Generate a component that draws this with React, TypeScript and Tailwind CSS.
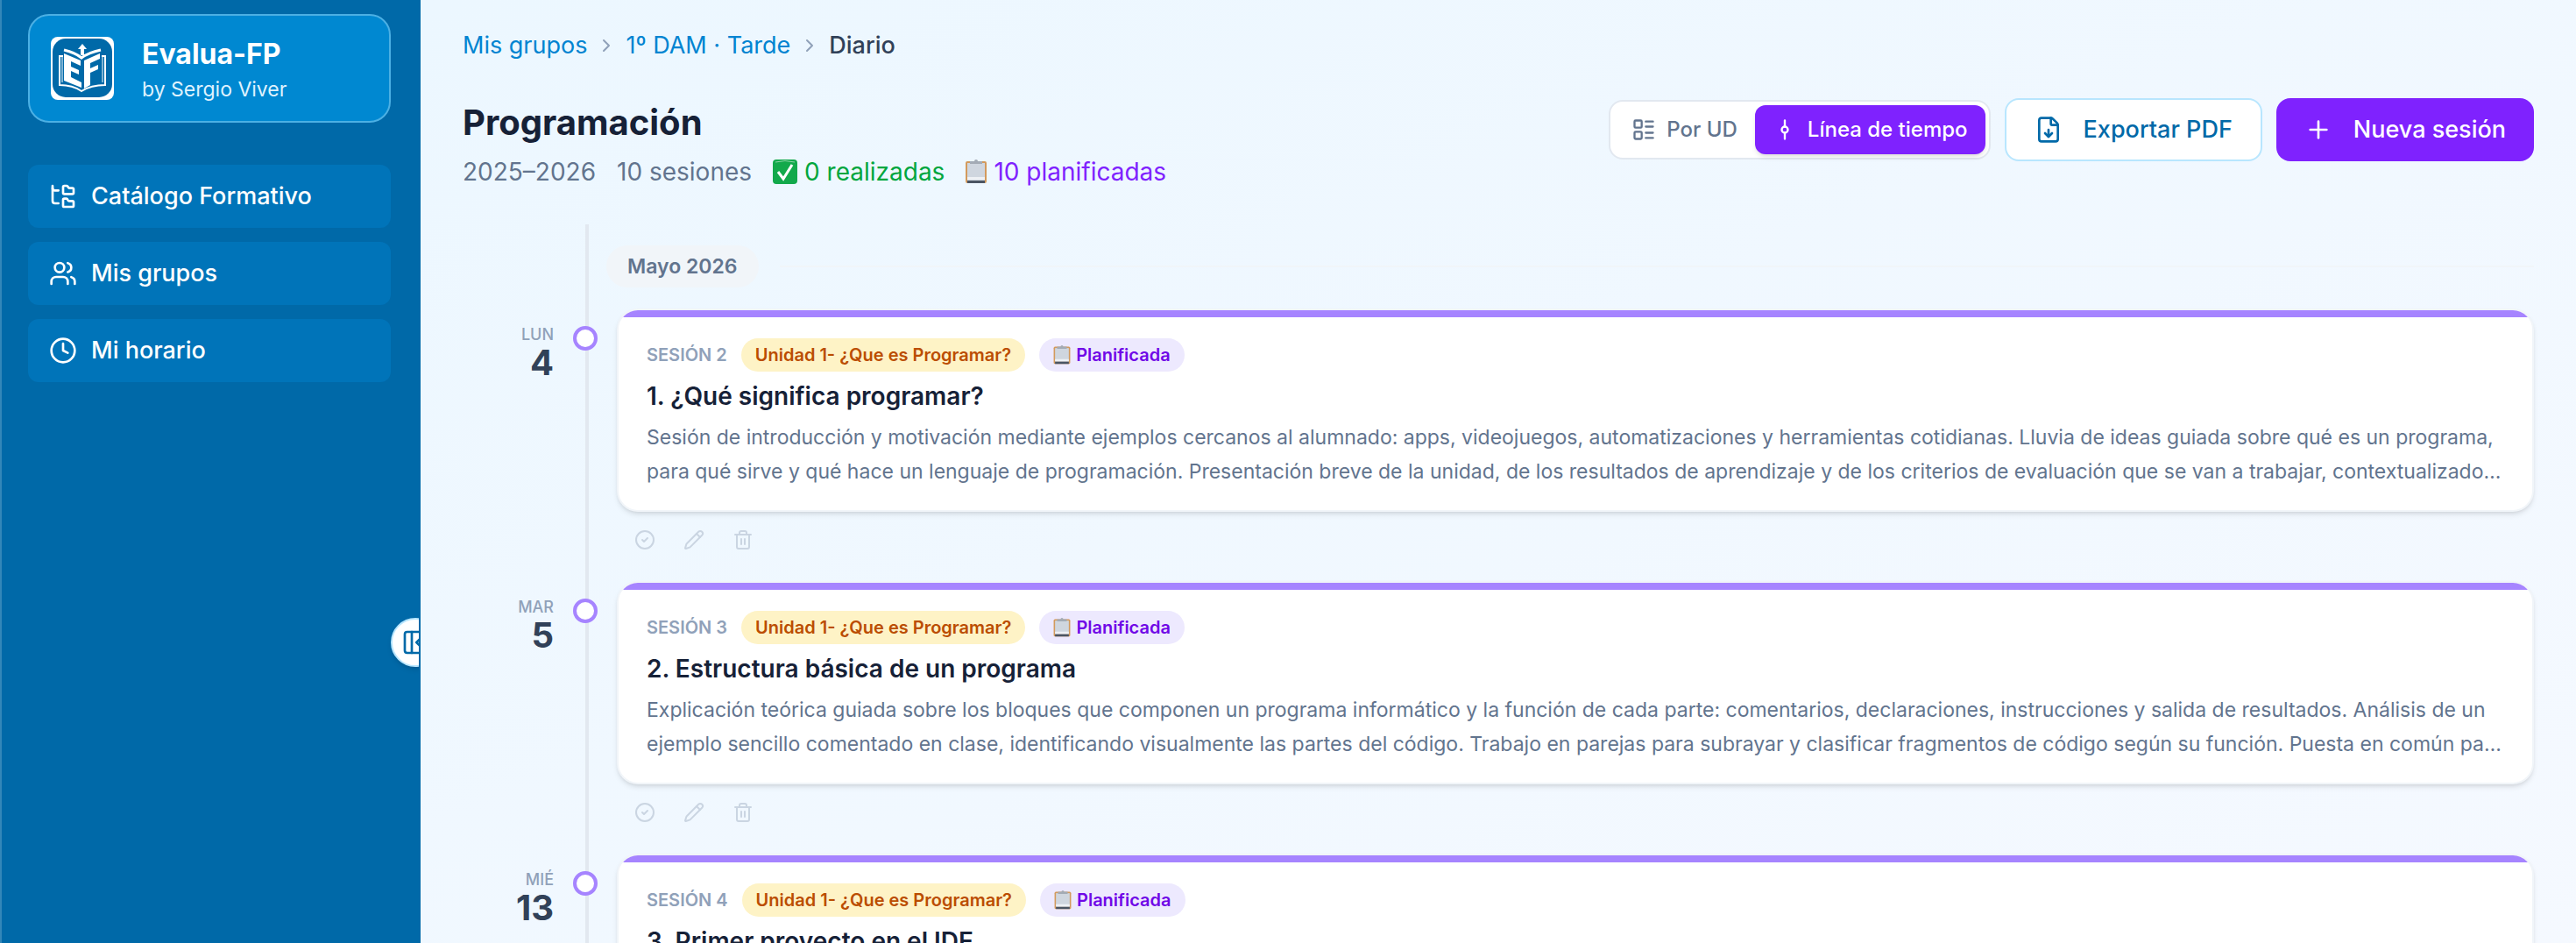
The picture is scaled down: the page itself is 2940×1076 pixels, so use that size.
import { CircleCheck, ChevronRight, Clock, FileDown, FolderTree, GitCommitVertical, LayoutList, PanelLeftClose, Pencil, Plus, Trash2, Users } from 'lucide-react';

const navItems = [
  { id: 1, label: 'Catálogo Formativo', icon: FolderTree },
  { id: 2, label: 'Mis grupos', icon: Users },
  { id: 3, label: 'Mi horario', icon: Clock },
];

const sessions = [
  {
    id: 2,
    weekday: 'LUN',
    day: 4,
    title: '1. ¿Qué significa programar?',
    lines: [
      'Sesión de introducción y motivación mediante ejemplos cercanos al alumnado: apps, videojuegos, automatizaciones y herramientas cotidianas. Lluvia de ideas guiada sobre qué es un programa,',
      'para qué sirve y qué hace un lenguaje de programación. Presentación breve de la unidad, de los resultados de aprendizaje y de los criterios de evaluación que se van a trabajar, contextualizado…',
    ],
  },
  {
    id: 3,
    weekday: 'MAR',
    day: 5,
    title: '2. Estructura básica de un programa',
    lines: [
      'Explicación teórica guiada sobre los bloques que componen un programa informático y la función de cada parte: comentarios, declaraciones, instrucciones y salida de resultados. Análisis de un',
      'ejemplo sencillo comentado en clase, identificando visualmente las partes del código. Trabajo en parejas para subrayar y clasificar fragmentos de código según su función. Puesta en común pa…',
    ],
  },
  {
    id: 4,
    weekday: 'MIÉ',
    day: 13,
    title: '3. Primer proyecto en el IDE',
    lines: [],
  },
];

const Logo = () => (
  <svg viewBox="0 0 72 72" className="size-[72px] shrink-0" aria-hidden="true">
    <rect width="72" height="72" rx="8" fill="#fff" />
    <rect x="2" y="2" width="68" height="67" rx="15" fill="#0069a8" />
    <path d="M36 8l5 6h-3v7h-4v-7h-3z" fill="#fff" />
    <g fill="none" stroke="#fff" strokeWidth="2">
      <path d="M14 22h-4v33q15 0 25 7q11-7 27-7V22h-4" />
      <path d="M13 22v30M59 22v30" strokeWidth="1" />
      <path d="M15 15q13 3 20 9q8-6 22-9" strokeWidth="3" />
    </g>
    <path d="M15 19l19 8v6l-11-5v6l9 4v5l-9-4v7l12 6v6l-20-8z" fill="#fff" />
    <path d="M38 27l18-8v6l-11 5v6l9-4v5l-9 4v14l-7 4z" fill="#fff" />
  </svg>
);

const Clipboard = ({ className }: { className: string }) => (
  <svg viewBox="0 0 24 28" className={className} aria-hidden="true">
    <rect x="0" y="2" width="24" height="25" rx="2" fill="#d39a5c" />
    <rect x="2" y="4" width="20" height="20" fill="#cfd6df" />
    <path d="M2 20h20v3H2z" fill="#eef1f5" />
    <path d="M2 24h20v3H2z" fill="#4b5563" />
    <path d="M5 2h5a2 2 0 0 1 4 0h5v3H5z" fill="#a3abb5" />
  </svg>
);

const CheckMark = () => (
  <svg viewBox="0 0 28 28" className="size-7" aria-hidden="true">
    <rect width="28" height="28" rx="4" fill="#12a94b" />
    <path d="M3 3q11-3 22 0" fill="none" stroke="#8fd3a8" />
    <path d="M6 14l6 8L22 6" fill="none" stroke="#fff" strokeWidth="3" />
  </svg>
);

const Sidebar = () => (
  <aside className="relative w-[480px] shrink-0 overflow-hidden border-x-2 border-l-[#3387b9] border-r-[#0069a8] bg-[#0069a8] pl-[30px] pr-8 pt-4">
    <div className="flex h-[124px] items-center gap-8 rounded-3xl border-2 border-[#4cb0e4] bg-[#0088d1] px-6">
      <Logo />
      <div className="pt-2 text-white">
        <div className="text-[32px] font-bold leading-10">Evalua-FP</div>
        <div className="text-[23px] leading-10 text-[#dff2fe]">by Sergio Viver</div>
      </div>
    </div>
    <nav className="mt-12 flex flex-col gap-4">
      {navItems.map(({ id, label, icon: Icon }) => (
        <a key={id} href="#" className="flex h-[72px] items-center gap-4 rounded-xl bg-[#0074b9] px-6 text-[27px] font-medium text-white">
          <Icon className="size-8" />
          {label}
        </a>
      ))}
    </nav>
    <button aria-label="Contraer menú" className="absolute -right-6 top-[705px] flex size-14 items-center justify-center rounded-full border-2 border-[#b8e6fe] bg-white text-[#0069a8] shadow-md">
      <PanelLeftClose className="size-8" />
    </button>
  </aside>
);

const Header = () => (
  <header>
    <nav className="flex items-center gap-[10px] text-[27px] leading-10 text-[#0084d1]">
      <a href="#">Mis grupos</a>
      <ChevronRight className="size-6 text-[#90a1b9]" />
      <a href="#">1º DAM · Tarde</a>
      <ChevronRight className="size-6 text-[#90a1b9]" />
      <span className="font-medium text-[#314158]">Diario</span>
    </nav>
    <div className="mt-10 flex items-start justify-between">
      <div>
        <h1 className="text-[40px] font-bold leading-14 text-[#162137]">Programación</h1>
        <div className="mt-2 flex items-center gap-6 text-[28px] leading-10 text-[#62748e]">
          <span>2025–2026</span>
          <span>10 sesiones</span>
          <span className="flex items-center gap-2 text-[#00a63e]"><CheckMark />0 realizadas</span>
          <span className="flex items-center gap-2 text-[#7f22fe]"><Clipboard className="h-7 w-6" />10 planificadas</span>
        </div>
      </div>
      <div className="flex items-center gap-4">
        <div className="flex h-[68px] items-center rounded-2xl border-2 border-[#e2e8f0] bg-white p-1 text-2xl font-medium">
          <button className="flex items-center gap-3 px-5 text-[#62748e]">
            <LayoutList className="size-7" />
            Por UD
          </button>
          <button className="flex h-14 items-center gap-3 rounded-xl bg-[#7f22fe] px-5 text-white shadow-md">
            <GitCommitVertical className="size-7" />
            Línea de tiempo
          </button>
        </div>
        <button className="flex h-[72px] items-center gap-6 rounded-2xl border-2 border-[#b8e6fe] bg-white px-8 text-[27px] font-medium text-[#0069a8]">
          <FileDown className="size-8" />
          Exportar PDF
        </button>
        <button className="flex h-[72px] items-center gap-6 rounded-2xl bg-[#7f22fe] px-8 text-[27px] font-medium text-white">
          <Plus className="size-8" />
          Nueva sesión
        </button>
      </div>
    </div>
  </header>
);

const SessionRow = ({ session }: { session: (typeof sessions)[number] }) => (
  <div className="flex">
    <div className="w-[104px] shrink-0 pt-[18px] text-right">
      <div className="text-lg font-medium leading-6 text-[#90a1b9]">{session.weekday}</div>
      <div className="text-[40px] font-bold leading-10 text-[#314158]">{session.day}</div>
    </div>
    <div className="flex w-[72px] shrink-0 justify-center pt-5">
      <span className="z-10 size-7 rounded-full border-4 border-[#a684ff] bg-white" />
    </div>
    <div className="min-w-0 flex-1">
      <article className="overflow-hidden rounded-3xl border-2 border-[#f1f5f9] bg-white shadow-md">
        <div className="h-2 bg-[#a684ff]" />
        <div className="px-8 py-6">
          <div className="flex items-center gap-4 text-xl font-semibold">
            <span className="text-[#90a1b9]">SESIÓN {session.id}</span>
            <span className="flex h-[38px] items-center rounded-full bg-[#fef3c6] px-4 text-[#bb4d00]">Unidad 1- ¿Que es Programar?</span>
            <span className="flex h-[38px] items-center gap-[6px] rounded-full bg-[#ede9fe] px-4 text-[#7008e7]">
              <Clipboard className="h-[22px] w-5" />
              Planificada
            </span>
          </div>
          <h2 className="mt-2 text-[28px] font-semibold leading-10 text-[#162137]">{session.title}</h2>
          <p className="mt-2 min-h-[78px] text-[23px] leading-[39px] text-[#62748e]">
            {session.lines.map(line => (
              <span key={line} className="block whitespace-nowrap">{line}</span>
            ))}
          </p>
        </div>
      </article>
      <div className="flex gap-8 px-5 pb-[35px] pt-5 text-[#cad5e2]">
        <button aria-label="Marcar como realizada"><CircleCheck className="size-6" /></button>
        <button aria-label="Editar"><Pencil className="size-6" /></button>
        <button aria-label="Eliminar"><Trash2 className="size-6" /></button>
      </div>
    </div>
  </div>
);

const App = () => {
  return (
    <div className="flex h-screen overflow-hidden bg-[#f0f9ff] font-['Inter',sans-serif]">
      <Sidebar />
      <main className="min-w-0 flex-1 overflow-hidden bg-linear-to-br from-[#ecf7ff] to-[#f5f9ff] px-12 pt-8">
        <Header />
        <section className="relative mt-10 pt-6">
          <div className="absolute bottom-0 left-[140px] top-0 w-1 bg-[#e2e8f0]" />
          <div className="mb-6 ml-[164px] flex items-center gap-6">
            <span className="rounded-full bg-[#f1f5f9] px-6 py-1 text-[23px] font-semibold leading-10 text-[#62748e]">Mayo 2026</span>
            <div className="h-0.5 flex-1 bg-[#f1f5f9]" />
          </div>
          {sessions.map(session => (
            <SessionRow key={session.id} session={session} />
          ))}
        </section>
      </main>
    </div>
  );
};

export default App;
